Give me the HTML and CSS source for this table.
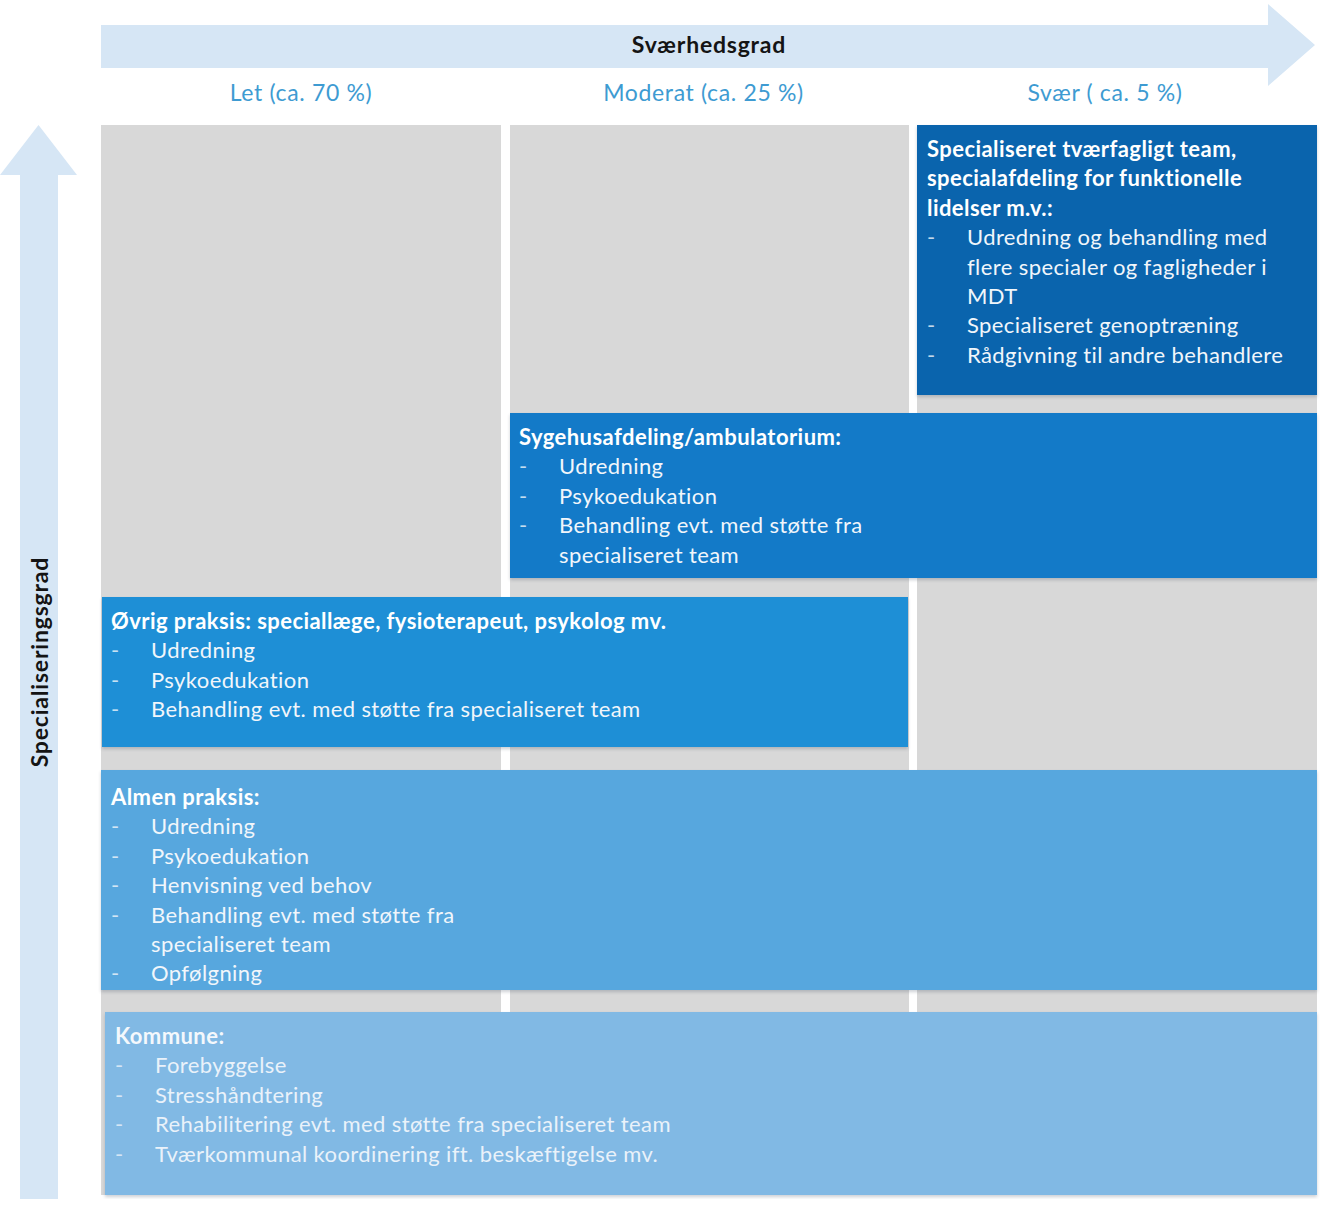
FILE: index.html
```html
<!DOCTYPE html>
<html lang="da">
<head>
<meta charset="utf-8">
<title>Sværhedsgrad og specialiseringsgrad</title>
<link rel="stylesheet" href="styles.css">
</head>
<body>
<div class="page">
  <header class="top">
    <div class="top-arrow">
      <svg class="arrow-svg" width="1216" height="82" viewBox="0 0 1216 82" aria-hidden="true">
        <polygon points="0,21 1167,21 1167,0 1214,41 1167,82 1167,64 0,64" fill="#d6e6f5"/>
      </svg>
      <div class="top-title">Sværhedsgrad</div>
    </div>
    <div class="levels">
      <div class="level level-1">Let (ca. 70 %)</div>
      <div class="level level-2">Moderat (ca. 25 %)</div>
      <div class="level level-3">Svær ( ca. 5 %)</div>
    </div>
  </header>

  <main class="main">
    <div class="side">
      <svg class="side-svg" width="78" height="1074" viewBox="0 0 78 1074" aria-hidden="true">
        <polygon points="38.5,0 77,50 58,50 58,1074 20,1074 20,50 0,50" fill="#d6e6f5"/>
      </svg>
      <div class="side-title">Specialiseringsgrad</div>
    </div>

    <div class="diagram">
      <div class="col col-1"></div>
      <div class="col col-2"></div>
      <div class="col col-3"></div>

      <section class="box box-spec">
        <h3 class="box-title">Specialiseret tværfagligt team,<br>specialafdeling for funktionelle<br>lidelser m.v.:</h3>
        <ul class="items">
          <li>Udredning og behandling med<br>flere specialer og fagligheder i<br>MDT</li>
          <li>Specialiseret genoptræning</li>
          <li>Rådgivning til andre behandlere</li>
        </ul>
      </section>

      <section class="box box-hosp">
        <h3 class="box-title">Sygehusafdeling/ambulatorium:</h3>
        <ul class="items">
          <li>Udredning</li>
          <li>Psykoedukation</li>
          <li>Behandling evt. med støtte fra<br>specialiseret team</li>
        </ul>
      </section>

      <section class="box box-other">
        <h3 class="box-title">Øvrig praksis: speciallæge, fysioterapeut, psykolog mv.</h3>
        <ul class="items">
          <li>Udredning</li>
          <li>Psykoedukation</li>
          <li>Behandling evt. med støtte fra specialiseret team</li>
        </ul>
      </section>

      <section class="box box-gp">
        <h3 class="box-title">Almen praksis:</h3>
        <ul class="items">
          <li>Udredning</li>
          <li>Psykoedukation</li>
          <li>Henvisning ved behov</li>
          <li>Behandling evt. med støtte fra<br>specialiseret team</li>
          <li>Opfølgning</li>
        </ul>
      </section>

      <section class="box box-mun">
        <h3 class="box-title">Kommune:</h3>
        <ul class="items">
          <li>Forebyggelse</li>
          <li>Stresshåndtering</li>
          <li>Rehabilitering evt. med støtte fra specialiseret team</li>
          <li>Tværkommunal koordinering ift. beskæftigelse mv.</li>
        </ul>
      </section>
    </div>
  </main>
</div>
</body>
</html>
```

FILE: styles.css
```css
html, body {
  margin: 0;
  padding: 0;
  background: #ffffff;
}

body {
  font-family: Lato, "Liberation Sans", sans-serif;
  color: #1a1a1a;
}

.page {
  width: 1340px;
  padding-top: 4px;
}

/* ---------- top axis ---------- */
.top {
  margin-left: 101px;
  width: 1216px;
}

.top-arrow {
  display: grid;
  height: 82px;
}

.arrow-svg,
.top-title {
  grid-area: 1 / 1;
}

.arrow-svg {
  display: block;
}

.top-title {
  justify-self: center;
  align-self: start;
  margin-top: 27px;
  font-size: 23px;
  line-height: 26px;
  letter-spacing: 0.8px;
  font-weight: 700;
  color: #141414;
}

.levels {
  display: grid;
  grid-template-columns: 400px 9px 399px 8px 400px;
  margin-top: -5px;
  height: 44px;
}

.level {
  font-size: 23px;
  line-height: 22px;
  letter-spacing: 0.65px;
  color: #3e9bd2;
  text-align: center;
}

.level-1 { grid-column: 1; }
.level-2 { grid-column: 3; padding-right: 12px; }
.level-3 { grid-column: 5; padding-right: 24px; }

/* ---------- main area ---------- */
.main {
  display: grid;
  grid-template-columns: 78px 1216px;
  column-gap: 23px;
  align-items: start;
}

.side {
  display: grid;
}

.side-svg,
.side-title {
  grid-area: 1 / 1;
}

.side-svg {
  display: block;
}

.side-title {
  justify-self: center;
  align-self: center;
  writing-mode: vertical-rl;
  transform: rotate(180deg);
  font-size: 23px;
  letter-spacing: 0.8px;
  font-weight: 700;
  color: #141414;
  line-height: 26px;
}

/* ---------- diagram grid ---------- */
.diagram {
  display: grid;
  grid-template-columns: 400px 9px 399px 8px 400px;
  grid-template-rows: 270px 18px 165px 19px 150px 23px 220px 22px 183px;
}

.col {
  grid-row: 1 / -1;
  background: #d8d8d8;
}

.col-1 { grid-column: 1; }
.col-2 { grid-column: 3; }
.col-3 { grid-column: 5; }

.box {
  position: relative;
  box-sizing: border-box;
  padding: 9px 10px 0 9px;
  color: #f1f6fb;
  box-shadow: 0 2px 3px rgba(60, 70, 90, 0.25);
  font-size: 22px;
  letter-spacing: 0.4px;
  line-height: 29.4px;
}

.box-title {
  margin: 0;
  font-size: 22px;
  font-weight: 700;
  letter-spacing: 0.44px;
  line-height: 29.4px;
  color: #ffffff;
}

.items {
  list-style: none;
  margin: 0;
  padding: 0;
}

.items li {
  display: grid;
  grid-template-columns: 40px auto;
}

.items li::before {
  content: "-";
  color: inherit;
  opacity: 0.8;
}

.box-spec {
  grid-column: 5;
  grid-row: 1;
  background: #0a64ad;
  padding-left: 10px;
}

.box-hosp {
  grid-column: 3 / 6;
  grid-row: 3;
  background: #137ac8;
}

.box-other {
  grid-column: 1 / 4;
  grid-row: 5;
  background: #1e8fd6;
  margin-left: 1px;
  margin-right: 1px;
}

.box-gp {
  grid-column: 1 / 6;
  grid-row: 7;
  background: #57a7de;
  padding-top: 12px;
  padding-left: 10px;
}

.box-mun {
  grid-column: 1 / 6;
  grid-row: 9;
  background: #81b9e4;
  margin-left: 4px;
  padding-left: 10px;
  color: #eaf2fa;
}

.box-mun .box-title {
  color: #f4f8fc;
}
```
